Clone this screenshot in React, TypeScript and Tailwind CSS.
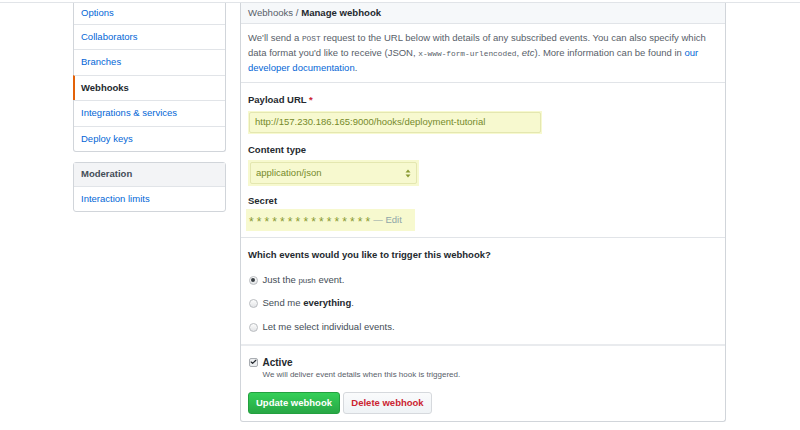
import { Check } from "lucide-react";

const sideItems = [
  "Collaborators",
  "Branches",
  "Webhooks",
  "Integrations & services",
  "Deploy keys",
];

const Radio = ({ checked = false }: { checked?: boolean }) => (
  <span className="w-[9px] h-[9px] rounded-full border border-[#b9bcc0] bg-gradient-to-b from-[#fdfdfd] to-[#e2e4e6] flex items-center justify-center shrink-0">
    {checked && <span className="w-[3.5px] h-[3.5px] rounded-full bg-[#3a3f44]" />}
  </span>
);

export default function App() {
  return (
    <div className="w-[800px] h-[430px] bg-white pt-[2px] overflow-hidden font-['Liberation_Sans',Arial,sans-serif] text-[9.5px] text-[#24292e]">
      <div className="border-t border-[#e1e4e8]" />
      <div className="w-[653px] ml-[73px] flex gap-[14px]">
        {/* Settings menu */}
        <div className="w-[153px] shrink-0">
          <div className="border-x border-b border-[#d1d5da] rounded-b-[3px]">
            <div className="h-[21px] flex items-center px-[7px] text-[#0366d6]">Options</div>
            {sideItems.map((item) => {
              const active = item === "Webhooks";
              return (
                <div
                  key={item}
                  className={
                    active
                      ? "h-[25.4px] border-t border-[#e1e4e8] flex items-center pl-[6px] -ml-px border-l-2 border-l-[#e36209] font-bold text-[#24292e]"
                      : "h-[25.4px] border-t border-[#e1e4e8] flex items-center px-[7px] text-[#0366d6]"
                  }
                >
                  {item}
                </div>
              );
            })}
          </div>
          <div className="mt-[10px] border border-[#d1d5da] rounded-[3px]">
            <div className="h-[24px] flex items-center px-[7px] bg-[#f3f4f6] font-bold text-[#444d56] border-b border-[#e1e4e8]">
              Moderation
            </div>
            <div className="h-[24px] flex items-center px-[7px] text-[#0366d6]">Interaction limits</div>
          </div>
        </div>

        {/* Webhook form */}
        <div className="w-[486px] shrink-0 border-x border-b border-[#d1d5da] rounded-b-[3px]">
          <div className="h-[21px] flex items-center px-[7px] bg-[#f6f8fa] border-b border-[#e1e4e8] text-[9.6px]">
            <span className="text-[#586069]">Webhooks /&nbsp;</span>
            <span className="font-bold">Manage webhook</span>
          </div>

          <div className="px-[7px] py-[7px] leading-[14px] text-[#586069] border-b border-[#e1e4e8]">
            We'll send a <code className="font-['Liberation_Mono',monospace] text-[7.8px]">POST</code> request to the URL below with details of any subscribed events. You can also specify which
            <br />
            data format you'd like to receive (JSON,{" "}
            <code className="font-['Liberation_Mono',monospace] text-[7.8px]">x-www-form-urlencoded</code>, <em>etc</em>). More information can be found in{" "}
            <span className="text-[#0366d6]">our</span>
            <br />
            <span className="text-[#0366d6]">developer documentation</span>.
          </div>

          <div className="px-[7px] pt-[10px] pb-[6px] border-b border-[#e1e4e8]">
            <div className="leading-[14px] font-bold">
              Payload URL <span className="text-[#cb2431]">*</span>
            </div>
            <div className="mt-[4px] w-[294px] h-[23px] bg-[#f7f9cf] p-px">
              <div className="h-full border border-[#e4e7b0] rounded-[2px] flex items-center px-[5px] text-[#768a2b]">
                http://157.230.186.165:9000/hooks/deployment-tutorial
              </div>
            </div>

            <div className="mt-[9px] leading-[14px] font-bold">Content type</div>
            <div className="mt-[3px] w-[171px] h-[26px] bg-[#f7f9cf] p-[2px]">
              <div className="h-full border border-[#e4e7b0] rounded-[2px] flex items-center justify-between px-[5px] text-[#768a2b]">
                <span>application/json</span>
                <svg width="6" height="9" viewBox="0 0 6 9" className="fill-[#8a9a33]">
                  <path d="M3 0.5 L5.5 3.5 H0.5 Z" />
                  <path d="M3 8.5 L5.5 5.5 H0.5 Z" />
                </svg>
              </div>
            </div>

            <div className="mt-[8px] leading-[14px] font-bold">Secret</div>
            <div className="mt-px -ml-[2px] w-[169px] h-[22px] bg-[#f7f9cf] flex items-center pl-[3px]">
              <span className="text-[#8a9a33] text-[12px] tracking-[3.1px] leading-none pt-[3px]">****************</span>
              <span className="text-[#8fa5a8]">— Edit</span>
            </div>
          </div>

          <div className="px-[7px] pt-[10px] pb-[10px] border-b-2 border-[#e9ebee]">
            <div className="leading-[14px] font-bold">Which events would you like to trigger this webhook?</div>
            <div className="mt-[11px] flex flex-col gap-[9.5px] text-[#444d56]">
              <div className="h-[14px] flex items-center gap-[5px] pl-[0.5px]">
                <Radio checked />
                <span>
                  Just the <span className="text-[8px]">push</span> event.
                </span>
              </div>
              <div className="h-[14px] flex items-center gap-[5px] pl-[0.5px]">
                <Radio />
                <span>
                  Send me <b className="text-[#24292e]">everything</b>.
                </span>
              </div>
              <div className="h-[14px] flex items-center gap-[5px] pl-[0.5px]">
                <Radio />
                <span>Let me select individual events.</span>
              </div>
            </div>
          </div>

          <div className="px-[7px] pt-[9px] pb-[7px]">
            <div className="h-[14px] flex items-center gap-[5px] pl-[0.5px]">
              <span className="w-[9px] h-[9px] rounded-[2px] border border-[#a9adb2] bg-[#eceef0] flex items-center justify-center">
                <Check size={8} strokeWidth={4} className="text-[#24292e]" />
              </span>
              <span className="font-bold text-[10px]">Active</span>
            </div>
            <div className="pl-[14.5px] mt-px leading-[10px] text-[8px] text-[#586069]">
              We will deliver event details when this hook is triggered.
            </div>
            <div className="mt-[12px] flex gap-[3px]">
              <button className="w-[92px] h-[22px] rounded-[3px] border border-[#23a03f] bg-gradient-to-b from-[#34d058] to-[#28a745] text-white font-bold">
                Update webhook
              </button>
              <button className="w-[89px] h-[22px] rounded-[3px] border border-[#d6d9dd] bg-gradient-to-b from-[#fafbfc] to-[#eff3f6] text-[#cb2431] font-bold">
                Delete webhook
              </button>
            </div>
          </div>
        </div>
      </div>
    </div>
  );
}
